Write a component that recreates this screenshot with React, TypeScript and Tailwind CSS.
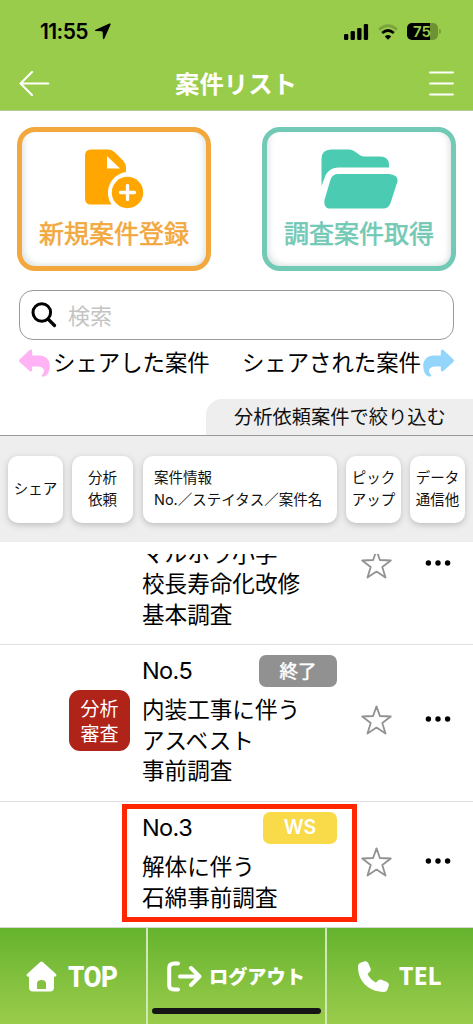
import type { ReactNode } from 'react';

const JP = "font-['Noto_Sans_CJK_JP',sans-serif]";

function StatusBar() {
  return (
    <div className="flex h-[63px] items-center justify-between pl-[40px] pr-[32px]">
      <div className="flex items-center gap-[6px] font-['Inter',sans-serif] text-[21px] font-semibold leading-none tracking-[-0.6px] text-black">
        <span>11:55</span>
        <svg width="17" height="17" viewBox="0 0 17 17">
          <path d="M15.4.5 Q17.2 0 16.500 1.700 L10.400 15.400 Q9.400 17 8.900 15.200 L8.700 9.400 Q8.600 8.400 7.600 8.300 L1.800 8.100 Q0 7.500 1.600 6.700Z" fill="#000" />
        </svg>
      </div>
      <div className="flex items-center gap-[9px]">
        <svg width="25" height="16" viewBox="0 0 25 16" fill="#000">
          <rect x="0" y="10" width="4.300" height="6" rx="1.300" />
          <rect x="6.600" y="7" width="4.300" height="9" rx="1.300" />
          <rect x="13.200" y="4" width="4.300" height="12" rx="1.300" />
          <rect x="19.800" y="0" width="4.300" height="16" rx="1.300" />
        </svg>
        <svg width="20" height="16" viewBox="0 0 20 16" fill="none" strokeWidth="2.800">
          <path d="M1 5.600 Q10 -2.300 19 5.600" stroke="#79a33c" />
          <path d="M4.200 9 Q10 3.900 15.800 9" stroke="#000" />
          <path d="M10 15.700 L6.800 12.400 Q10 9.600 13.200 12.400Z" fill="#000" />
        </svg>
        <div className="flex items-center">
          <div className="flex h-[17px] w-[31px] items-center justify-center rounded-[5px] bg-[linear-gradient(90deg,#000_74%,#6d9236_74%)] pr-[1px] font-['Inter',sans-serif] text-[15px] font-semibold leading-none text-[#9acc4b]">
            75
          </div>
          <div className="ml-[1px] h-[5px] w-[2px] rounded-r-full bg-[#79a33c]" />
        </div>
      </div>
    </div>
  );
}

function ActionCard({ label, tone, children }: { label: string; tone: string; children: ReactNode }) {
  return (
    <button
      className={`flex h-[144px] w-[194px] flex-col items-center rounded-[18px] border-[5px] pt-[17px] shadow-[inset_5px_-4px_7px_-4px_#d5dddd,inset_-5px_-1px_7px_-4px_#d5dddd] ${tone}`}
    >
      {children}
      <span className="mt-[5px] whitespace-nowrap text-[25px] leading-[36px] [-webkit-text-stroke:0.6px_currentColor]">{label}</span>
    </button>
  );
}

function ShareArrow({ color, flip }: { color: string; flip?: boolean }) {
  return (
    <svg width="31" height="28" viewBox="0 0 31 28" className={flip ? '-scale-x-100' : ''}>
      <path
        d="M.7 10.200 L10.600 1.100 Q13-.7 13.200 2.300 V6.400 H20 C27 6.400 31 11 30.800 17 C30.600 22.500 28.400 27.300 24.600 27.600 C22.100 27.800 22.100 25.900 23.900 24.700 C26.500 21.800 24.500 18 19.500 17.600 H13.200 V20.600 Q13 23.500 10.600 21.900 L.7 13 Q-.7 11.600 .7 10.200Z"
        fill={color}
      />
    </svg>
  );
}

function HeadCell({ className, children }: { className: string; children: ReactNode }) {
  return (
    <div
      className={`flex h-[67px] shrink-0 flex-col justify-center whitespace-nowrap rounded-[10px] bg-white pb-[2px] font-['Liberation_Sans','Noto_Sans_CJK_JP',sans-serif] text-[14.500px] leading-[22px] text-[#111] shadow-[0_2px_6px_#bdbdbd] ${className}`}
    >
      {children}
    </div>
  );
}

function Star() {
  return (
    <svg width="31" height="30" viewBox="0 0 31 30" fill="none" stroke="#929292" strokeWidth="1.800" strokeLinejoin="round">
      <path d="M15.500 1.400 L18.900 11 L29.800 11.500 L21.300 18 L24.500 28.600 L15.500 22.600 L6.500 28.600 L9.700 18 L1.200 11.500 L12.100 11Z" />
    </svg>
  );
}

function Dots() {
  return (
    <svg width="26" height="6" viewBox="0 0 26 6" fill="#000">
      <circle cx="3.400" cy="3" r="2.700" />
      <circle cx="13" cy="3" r="2.700" />
      <circle cx="22.600" cy="3" r="2.700" />
    </svg>
  );
}

function RowActions({ className }: { className: string }) {
  return (
    <div className={`flex h-[30px] shrink-0 items-center ${className}`}>
      <Star />
      <div className="ml-[33px] pb-[2px]">
        <Dots />
      </div>
    </div>
  );
}

function RowTitle({ no, badge, badgeClass }: { no: string; badge: string; badgeClass: string }) {
  return (
    <div className="flex h-[32px] items-center justify-between">
      <span className="font-['Inter',sans-serif] text-[23.500px] leading-none tracking-[-0.6px]">{no}</span>
      <span className={`flex h-[32px] items-center justify-center rounded-[7px] leading-none text-white ${badgeClass}`}>
        {badge}
      </span>
    </div>
  );
}

function Lines({ items, className }: { items: string[]; className: string }) {
  return (
    <div className={`whitespace-nowrap text-[22.600px] leading-[30.500px] ${className}`}>
      {items.map((line) => (
        <div key={line}>{line}</div>
      ))}
    </div>
  );
}

export default function App() {
  return (
    <div className={`flex h-[1024px] w-[473px] flex-col overflow-hidden bg-white text-black ${JP}`}>
      <header className="h-[111px] shrink-0 border-b border-[#b5c896] bg-[#9acc4b]">
        <StatusBar />
        <div className="flex h-[40px] items-center justify-between pl-[19px] pr-[19px]">
          <svg width="31" height="26" viewBox="0 0 31 26" fill="none" stroke="#fff" strokeWidth="2.100" strokeLinecap="round" strokeLinejoin="round">
            <path d="M13 2 L1.500 13.500 L13 25 M1.500 13.500 H29.300" />
          </svg>
          <h1 className="pr-[7px] text-[24.400px] font-bold leading-none text-white">案件リスト</h1>
          <svg width="25" height="26" viewBox="0 0 25 26" stroke="#fff" strokeWidth="1.900" strokeLinecap="round">
            <path d="M1 2.500 H24 M1 13.500 H24 M1 24.500 H24" />
          </svg>
        </div>
      </header>

      <div className="flex shrink-0 justify-between px-[17px] pt-[16px]">
        <ActionCard label="新規案件登録" tone="border-[#f2a83d] text-[#f2a83d]">
          <svg width="60" height="60" viewBox="0 0 60 60" fill="#ffa600">
            <path
              fillRule="evenodd"
              d="M7 .5 H24 Q28 .5 31 3.400 L39 11.400 Q42 14.500 42 18.500 V23 A21 21 0 0 0 27.500 55.500 H7 Q1 55.500 1 49.500 V6.500 Q1 .5 7 .5Z M23 7 V19.500 H36Z"
            />
            <circle cx="43.500" cy="43.500" r="15.700" />
            <path d="M43.500 36.500 V50.500 M36.500 43.500 H50.500" stroke="#fff" strokeWidth="3.300" strokeLinecap="round" />
          </svg>
        </ActionCard>
        <ActionCard label="調査案件取得" tone="border-[#72c9b5] text-[#72c9b5]">
          <svg width="77" height="60" viewBox="0 0 77 60" fill="#4acbb2">
            <path d="M10 .5 H28 Q31 .5 33.500 2.300 L39 6.200 Q41 7.500 44 7.500 H59 Q67.500 7.800 68 15 V18.500 H18 C10 18.500 5.500 23 3.500 29 L.5 37 V10 Q.5 .8 10 .5Z" />
            <path d="M17 25 H68 Q78 26 76.300 33 L69.500 54 Q67.700 59.500 62 59.500 H8 Q2.500 58.500 3.500 51 L9.500 30.500 Q11.500 25 17 25Z" />
          </svg>
        </ActionCard>
      </div>

      <div className="mx-[19px] mt-[19px] flex h-[50px] shrink-0 items-center rounded-[14px] border-[1.500px] border-[#999] pl-[11px]">
        <svg width="26" height="26" viewBox="0 0 26 26" fill="none" stroke="#000" strokeWidth="3" strokeLinecap="round">
          <circle cx="10.800" cy="10.500" r="8.800" />
          <path d="M17 17 L23.500 23.500" strokeWidth="3.200" />
        </svg>
        <span className="ml-[11px] pb-[2px] text-[22px] leading-none text-[#c4c4c4]">検索</span>
      </div>

      <div className="flex h-[46px] shrink-0 items-center justify-between whitespace-nowrap pl-[19px] pr-[19px] text-[22.400px] leading-none">
        <div className="flex items-center gap-[3px]">
          <ShareArrow color="#ffb2f4" />
          <span className="pb-[3px]">シェアした案件</span>
        </div>
        <div className="flex items-center gap-[2px]">
          <span className="pb-[3px]">シェアされた案件</span>
          <ShareArrow color="#94d6fb" flip />
        </div>
      </div>

      <div className="mt-[13px] flex h-[37px] shrink-0 justify-end border-b border-[#999]">
        <div className="flex w-[267px] items-center whitespace-nowrap rounded-tl-[16px] bg-[#eee] pl-[28px] text-[19.250px] leading-none text-[#111]">
          分析依頼案件で絞り込む
        </div>
      </div>

      <div className="flex h-[106px] shrink-0 bg-[#eee] pl-[8px] pt-[20px]">
        <HeadCell className="w-[55px] items-center">シェア</HeadCell>
        <HeadCell className="ml-[9px] w-[61px] items-center">
          <span>分析</span>
          <span>依頼</span>
        </HeadCell>
        <HeadCell className="ml-[10px] w-[194px] pl-[11px]">
          <span>案件情報</span>
          <span>
            <span className="font-['Inter',sans-serif]">No.</span>／ステイタス／案件名
          </span>
        </HeadCell>
        <HeadCell className="ml-[9px] w-[55px] items-center">
          <span>ピック</span>
          <span>アップ</span>
        </HeadCell>
        <HeadCell className="ml-[9px] w-[55px] items-center">
          <span>データ</span>
          <span>通信他</span>
        </HeadCell>
      </div>

      <main className="flex h-[385px] shrink-0 flex-col pt-[12px]">
        <section className="flex h-[91px] shrink-0 items-end overflow-hidden border-b border-[#dfe2e4]">
          <div className="ml-[142px] w-[220px] shrink-0 pb-[15px]">
            <Lines items={['マルホラ小学', '校長寿命化改修', '基本調査']} className="" />
          </div>
          <RowActions className="mb-[65px] ml-[-1px]" />
        </section>

        <section className="flex h-[157px] shrink-0 border-b border-[#dfe2e4]">
          <div className="ml-[69px] mt-[45px] flex h-[61px] w-[61px] shrink-0 flex-col items-center justify-center rounded-[11px] bg-[#b02318] pb-[2px] text-[19px] leading-[25px] text-white">
            <span>分析</span>
            <span>審査</span>
          </div>
          <div className="ml-[12px] w-[195px] shrink-0 pt-[10px]">
            <RowTitle no="No.5" badge="終了" badgeClass="w-[78px] bg-[#919191] pb-[1px] text-[18.500px] [-webkit-text-stroke:0.500px_currentColor]" />
            <Lines items={['内装工事に伴う', 'アスベスト', '事前調査']} className="mt-[7px]" />
          </div>
          <RowActions className="ml-[24px] mt-[60px]" />
        </section>

        <section className="flex h-[125px] shrink-0">
          <div className="relative ml-[142px] w-[195px] shrink-0 pt-[10px]">
            <RowTitle no="No.3" badge="WS" badgeClass="w-[74px] bg-[#f9da49] font-['Inter',sans-serif] font-semibold text-[19.500px]" />
            <Lines items={['解体に伴う', '石綿事前調査']} className="mt-[7px]" />
            <div className="absolute left-[-20px] top-[2px] h-[118px] w-[235px] border-[5px] border-[#ff2600]" />
          </div>
          <RowActions className="ml-[24px] mt-[45px]" />
        </section>
      </main>

      <nav className="flex h-[97px] shrink-0 border-t border-[#d5d9d2] bg-gradient-to-b from-[#65b32e] to-[#9acc4b] font-bold text-white">
        <div className="flex w-[148px] shrink-0 items-center border-r-2 border-[#cfe6b6] pl-[26px]">
          <svg width="31" height="31" viewBox="0 0 31 31" fill="#fff">
            <path fillRule="evenodd" d="M14 1.200 Q15.500 0 17 1.200 L30 13 Q31.500 15.500 28 16 V26 Q28 30.500 24 30.500 H7 Q3 30.500 3 26 V16 Q-.5 15.500 1 13Z M11 28 H20 V22 Q19.500 19 15.500 19 Q11.500 19 11 22Z" />
          </svg>
          <span className="ml-[11px] origin-left scale-x-[0.87] pt-[2px] font-['Roboto',sans-serif] text-[30px] font-extrabold leading-none tracking-[-0.6px]">TOP</span>
        </div>
        <div className="relative flex w-[179px] shrink-0 items-center border-r-2 border-[#cfe6b6] pl-[18px]">
          <svg width="36" height="31" viewBox="0 0 36 31" fill="none" stroke="#fff" strokeWidth="4" strokeLinecap="round" strokeLinejoin="round">
            <path d="M12 2.500 H8 Q3.200 2.500 3.200 7 V24 Q3.200 28.500 8 28.500 H12" />
            <path d="M14 15.500 H33.500 M25 7 L33.500 15.500 L25 24" />
          </svg>
          <span className="ml-[7px] whitespace-nowrap pt-[2px] text-[19.200px] font-black leading-none">ログアウト</span>
          <div className="absolute left-[4px] top-[80px] h-[6px] w-[169px] rounded-full bg-[#151515]" />
        </div>
        <div className="flex flex-1 items-center pl-[31px]">
          <svg width="31" height="31" viewBox="0 0 31 31" fill="#fff">
            <path d="M3 1.500 L7 .2 Q9.200-.2 10.200 2 L12.600 7.500 Q13.200 9.300 11.800 10.700 L9.500 13 Q12.500 19 18 21.500 L20.400 19.200 Q21.700 18 23.500 18.700 L29 21 Q31.300 22.200 30.800 24.400 L29.500 28.500 Q28.600 31 25.500 31 C10 30.500 0 20 0 5.500 Q0 2.500 3 1.500Z" />
          </svg>
          <span className="ml-[10px] pb-[2px] font-['Noto_Sans',sans-serif] text-[25px] font-bold leading-none">TEL</span>
        </div>
      </nav>
    </div>
  );
}
